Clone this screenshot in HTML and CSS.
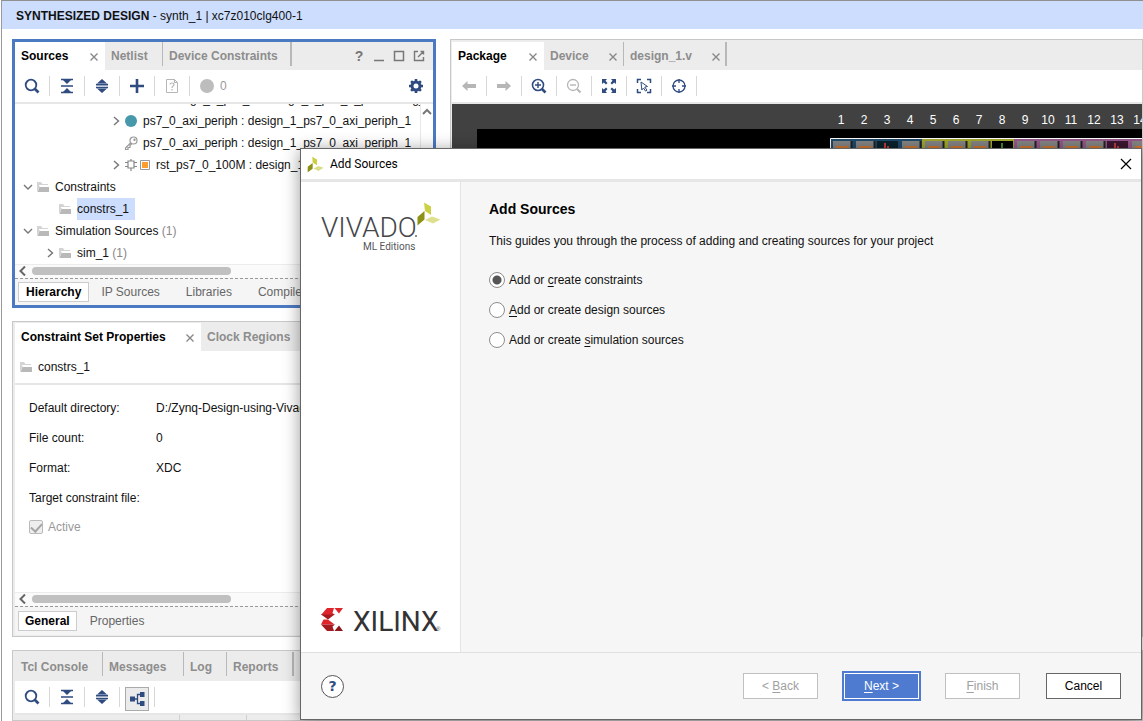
FILE: index.html
```html
<!DOCTYPE html>
<html lang="en">
<head>
<meta charset="utf-8">
<title>Synthesized Design - synth_1</title>
<link rel="stylesheet" href="styles.css">
</head>
<body>
<svg class="defs" aria-hidden="true">
  <defs>
    <symbol id="i-search" viewBox="0 0 16 16"><circle cx="7" cy="7" r="5.300" fill="none" stroke="currentColor" stroke-width="1.800"/><path d="M10.500 10.500l4 4" stroke="currentColor" stroke-width="2.600"/></symbol>
    <symbol id="i-collapse" viewBox="0 0 16 16"><path d="M3 1h10L8 6zM3 15h10L8 10z" fill="currentColor"/><path d="M2 1.500h12M2 14.500h12M2 8h12" stroke="currentColor" stroke-width="1.600"/></symbol>
    <symbol id="i-expand" viewBox="0 0 16 16"><path d="M3 5.500L8 1l5 4.500zM3 10.500L8 15l5-4.500z" fill="currentColor"/><path d="M2 6.700h12M2 9.500h12" stroke="currentColor" stroke-width="1.700"/></symbol>
    <symbol id="i-plus" viewBox="0 0 16 16"><path d="M8 1v14M1 8h14" stroke="currentColor" stroke-width="2.600"/></symbol>
    <symbol id="i-doc" viewBox="0 0 16 16"><path d="M2.500 1.500h8l3 3v10h-11z" fill="none" stroke="currentColor"/><path d="M10.500 1.500v3h3M6 6.500q0-1.500 2-1.500t2 1.500q0 1-1 1.500t-1 2M8 11v1.500" fill="none" stroke="currentColor" stroke-width="1.200"/></symbol>
    <symbol id="i-gear" viewBox="0 0 16 16"><circle cx="8" cy="8" r="4" fill="none" stroke="currentColor" stroke-width="3"/><path d="M8 1v3M8 12v3M1 8h3M12 8h3M3.100 3.100l2 2M10.900 10.900l2 2M3.100 12.900l2-2M10.900 5.100l2-2" stroke="currentColor" stroke-width="2.600"/></symbol>
    <symbol id="i-x" viewBox="0 0 10 10"><path d="M1.500 1.500l7 7M8.500 1.500l-7 7" stroke="currentColor" stroke-width="1.400"/></symbol>
    <symbol id="i-folder" viewBox="0 0 14 14"><path d="M1 12V2h4l1.500 2H12v2H4z" fill="#d4d4d4"/><path d="M3.500 7H13v5H1.500z" fill="#b9b9b9"/><path d="M3 5.500h10" stroke="#fff"/></symbol>
    <symbol id="i-right" viewBox="0 0 10 10"><path d="M3 1l4.500 4L3 9" fill="none" stroke="currentColor" stroke-width="1.400"/></symbol>
    <symbol id="i-down" viewBox="0 0 10 10"><path d="M1 3l4 4 4-4" fill="none" stroke="currentColor" stroke-width="1.400"/></symbol>
    <symbol id="i-left" viewBox="0 0 10 10"><path d="M7 0.500L2.500 5 7 9.500" fill="none" stroke="currentColor" stroke-width="2"/></symbol>
    <symbol id="i-back" viewBox="0 0 16 16"><path d="M1 8l5.500-5v3H15v4H6.500v3z" fill="currentColor"/></symbol>
    <symbol id="i-fwd" viewBox="0 0 16 16"><path d="M15 8L9.500 3v3H1v4h8.500v3z" fill="currentColor"/></symbol>
    <symbol id="i-zin" viewBox="0 0 16 16"><circle cx="7" cy="7" r="5.500" fill="none" stroke="currentColor" stroke-width="1.600"/><path d="M4 7h6M7 4v6" stroke="currentColor" stroke-width="1.400"/><path d="M11 11l3.500 3.500" stroke="currentColor" stroke-width="2.600"/></symbol>
    <symbol id="i-zout" viewBox="0 0 16 16"><circle cx="7" cy="7" r="5.500" fill="none" stroke="currentColor" stroke-width="1.300"/><path d="M4 7h6" stroke="currentColor" stroke-width="1.400"/><path d="M11 11l3.500 3.500" stroke="currentColor" stroke-width="2"/></symbol>
    <symbol id="i-fit" viewBox="0 0 16 16"><path d="M1 1h5L4.500 2.800 6.500 5 5 6.500 2.800 4.500 1 6zM15 1h-5l1.500 1.800L9.500 5 11 6.500l2.200-2L15 6zM1 15h5l-1.500-1.800 2-2.200L5 9.500l-2.200 2L1 10zM15 15h-5l1.500-1.800-2-2.200L11 9.500l2.200 2L15 10z" fill="currentColor"/></symbol>
    <symbol id="i-select" viewBox="0 0 16 16"><path d="M1.500 5V1.500H5M11 1.500h3.500V5M1.500 11v3.500H5M11 14.500h3.500V11" fill="none" stroke="currentColor" stroke-width="1.500"/><path d="M5 4l6.500 4.500-2.800.6 2.300 3-1.500 1-2-3.100L5.800 12z" fill="none" stroke="currentColor"/></symbol>
    <symbol id="i-target" viewBox="0 0 16 16"><circle cx="8" cy="8" r="6" fill="none" stroke="currentColor" stroke-width="1.300"/><path d="M8 1v4M8 11v4M1 8h4M11 8h4" stroke="currentColor" stroke-width="1.300"/></symbol>
    <symbol id="i-tree" viewBox="0 0 16 16"><path d="M1 5.500h5v5H1zM11 1h4.500v5H11zM11 10h4.500v5H11z" fill="currentColor"/><path d="M6 8h2.500M12 3.500H8.500v9H12" fill="none" stroke="currentColor" stroke-width="1.300"/></symbol>
    <symbol id="i-mark" viewBox="0 0 24 24"><path d="M7.500 1L14 5v8L8 9z" fill="#c9cf3e"/><path d="M8 10v8l-7 5v-8z" fill="#8b9016"/><path d="M9.500 17.500L16 14l7.500 2.500L16 21z" fill="#d9dd86"/></symbol>
  </defs>
</svg>

<div class="app">
  <header class="banner"><strong>SYNTHESIZED DESIGN</strong> - synth_1 | xc7z010clg400-1</header>

  <main class="workspace">
    <section class="panel focused sources">
      <div class="tabs">
        <button class="tab active w90">Sources<svg class="x"><use href="#i-x"/></svg></button>
        <button class="tab w58">Netlist</button>
        <button class="tab w129">Device Constraints</button>
        <div class="win">
          <span>?</span>
          <svg viewBox="0 0 12 12"><path d="M1 10.500h10" stroke="#777" stroke-width="1.500"/></svg>
          <svg viewBox="0 0 12 12"><path d="M1.500 1.500h9v9h-9z" fill="none" stroke="#777" stroke-width="1.500"/></svg>
          <svg viewBox="0 0 12 12"><path d="M5 1.500H1.500v9h9V7M5 7l5-5M7.500 1.500h3v3" fill="none" stroke="#777" stroke-width="1.400"/></svg>
        </div>
      </div>
      <div class="toolbar">
        <button aria-label="Search"><svg><use href="#i-search"/></svg></button>
        <button aria-label="Collapse all"><svg><use href="#i-collapse"/></svg></button>
        <button aria-label="Expand all"><svg><use href="#i-expand"/></svg></button>
        <button aria-label="Add sources"><svg><use href="#i-plus"/></svg></button>
        <button class="off" aria-label="File info"><svg><use href="#i-doc"/></svg></button>
        <span class="count"><i></i>0</span>
        <button class="gear" aria-label="Settings"><svg><use href="#i-gear"/></svg></button>
      </div>
      <div class="treebox">
        <ul class="tree">
          <li class="l4">design_1_ps7_0 : design_1_ps7_0_processing_0</li>
          <li class="l3"><svg class="tw"><use href="#i-right"/></svg><svg class="ic" viewBox="0 0 14 14"><circle cx="7" cy="7" r="6" fill="#4699ab"/></svg>ps7_0_axi_periph : design_1_ps7_0_axi_periph_1</li>
          <li class="l3"><span class="tw"></span><svg class="ic" viewBox="0 0 14 14"><g fill="none" stroke="#999" stroke-width="1.200"><circle cx="9.500" cy="4.500" r="3.500"/><path d="M7 6.500L1.500 12v1.500h2.500v-2h2v-2l1.800-1.800"/><circle cx="10.500" cy="3.700" r=".6"/></g></svg>ps7_0_axi_periph : design_1_ps7_0_axi_periph_1</li>
          <li class="l3"><svg class="tw"><use href="#i-right"/></svg><svg class="ic" viewBox="0 0 14 14"><g fill="none" stroke="#888" stroke-width="1.200"><path d="M4 3h6v7H4zM1 4.500h3M1 8.500h3M10 4.500h3M10 8.500h3M7 1v2M7 10v3"/></g></svg><svg class="ic tight" viewBox="0 0 14 14"><path d="M2.500 2.500h9v9h-9z" fill="#fff" stroke="#999"/><path d="M4 4h6v6H4z" fill="#ff9d2e"/></svg>rst_ps7_0_100M : design_1_rst_0</li>
          <li class="l0"><svg class="tw"><use href="#i-down"/></svg><svg class="ic"><use href="#i-folder"/></svg>Constraints</li>
          <li class="l1"><span class="tw"></span><svg class="ic"><use href="#i-folder"/></svg><span class="picked">constrs_1</span></li>
          <li class="l0"><svg class="tw"><use href="#i-down"/></svg><svg class="ic"><use href="#i-folder"/></svg>Simulation Sources <em>(1)</em></li>
          <li class="l1"><svg class="tw"><use href="#i-right"/></svg><svg class="ic"><use href="#i-folder"/></svg>sim_1 <em>(1)</em></li>
        </ul>
        <div class="vscroll"><svg viewBox="0 0 10 10"><path d="M1 7l4-4 4 4" fill="none" stroke="#777" stroke-width="2"/></svg></div>
      </div>
      <div class="hscroll"><svg><use href="#i-left"/></svg><i class="thumb"></i></div>
      <div class="views">
        <button class="on">Hierarchy</button><button>IP Sources</button><button>Libraries</button><button>Compile Order</button>
      </div>
    </section>

    <section class="panel props">
      <div class="tabs">
        <button class="tab active w186">Constraint Set Properties<svg class="x"><use href="#i-x"/></svg></button>
        <button class="tab w129">Clock Regions</button>
      </div>
      <div class="object"><svg class="ic"><use href="#i-folder"/></svg>constrs_1</div>
      <div class="details">
        <dl>
          <dt>Default directory:</dt><dd>D:/Zynq-Design-using-Vivado</dd>
          <dt>File count:</dt><dd>0</dd>
          <dt>Format:</dt><dd>XDC</dd>
          <dt>Target constraint file:</dt><dd></dd>
        </dl>
        <label class="check"><input type="checkbox" checked disabled>Active</label>
      </div>
      <div class="hscroll"><svg><use href="#i-left"/></svg><i class="thumb"></i></div>
      <div class="views"><button class="on">General</button><button>Properties</button></div>
    </section>

    <section class="panel device">
      <div class="tabs">
        <button class="tab active w92">Package<svg class="x"><use href="#i-x"/></svg></button>
        <button class="tab w80">Device<svg class="x"><use href="#i-x"/></svg></button>
        <button class="tab w103">design_1.v<svg class="x"><use href="#i-x"/></svg></button>
      </div>
      <div class="toolbar">
        <button class="off" aria-label="Back"><svg><use href="#i-back"/></svg></button>
        <button class="off" aria-label="Forward"><svg><use href="#i-fwd"/></svg></button>
        <button aria-label="Zoom in"><svg><use href="#i-zin"/></svg></button>
        <button class="off" aria-label="Zoom out"><svg><use href="#i-zout"/></svg></button>
        <button aria-label="Zoom fit"><svg><use href="#i-fit"/></svg></button>
        <button aria-label="Select area"><svg><use href="#i-select"/></svg></button>
        <button aria-label="Autofit selection"><svg><use href="#i-target"/></svg></button>
      </div>
      <div class="canvas">
        <svg width="100%" height="100%">
          <defs>
            <g id="cell"><path d="M3 37h18v12H3z" fill="#858585"/><path d="M6 42h12v8H6z" fill="#d07530"/><path d="M21.500 37v12" stroke="#222" stroke-width="2"/></g>
          </defs>
          <rect x="25" y="25" width="100%" height="100%" fill="#000"/>
          <g fill="#fff" font-size="12" text-anchor="middle">
            <text x="389" y="20">1</text><text x="412" y="20">2</text><text x="435" y="20">3</text><text x="458" y="20">4</text><text x="481" y="20">5</text><text x="504" y="20">6</text><text x="527" y="20">7</text><text x="550" y="20">8</text><text x="573" y="20">9</text><text x="596" y="20">10</text><text x="619" y="20">11</text><text x="642" y="20">12</text><text x="665" y="20">13</text><text x="688" y="20">14</text>
          </g>
          <rect x="378" y="34" width="92" height="20" fill="#204a6b"/>
          <rect x="470" y="34" width="92" height="20" fill="#a3a82c"/>
          <rect x="562" y="34" width="140" height="20" fill="#96588a"/>
          <path d="M378.500 60V34.500H700" fill="none" stroke="#fff"/>
          <use href="#cell" x="378"/><use href="#cell" x="401"/><use href="#cell" x="447"/><use href="#cell" x="470"/><use href="#cell" x="493"/><use href="#cell" x="516"/><use href="#cell" x="562"/><use href="#cell" x="585"/><use href="#cell" x="608"/><use href="#cell" x="631"/><use href="#cell" x="677"/>
          <path d="M425 37h21v12h-21z" fill="#0b222d"/><path d="M540 37h21v12h-21z" fill="#000"/><path d="M655 37h21v12h-21z" fill="#3c1730"/>
          <path d="M433 39v8M436 42v6M663 39v8M666 42v6" stroke="#c23a3a" stroke-width="2"/><path d="M550 39v9" stroke="#418a28" stroke-width="2"/>
          <g>
            <path d="M689 50h4v450h-4z" fill="#777"/>
            <path d="M689 57h4v14h-4zM689 110h4v14h-4zM689 130h4v12h-4z" fill="#d6752b"/>
            <path d="M689 82h4v22h-4zM689 312h4v20h-4zM689 497h4v33h-4z" fill="#000"/>
            <path d="M689 94h4v6h-4zM689 194h4v24h-4zM689 324h4v8h-4z" fill="#3f6b22"/>
            <path d="M689 172h4v3h-4zM689 332h4v3h-4z" fill="#a3e43a"/>
            <path d="M689 206h4v6h-4zM689 434h4v7h-4z" fill="#cf3434"/>
            <path d="M689 365h4v6h-4zM689 492h4v3h-4z" fill="#1a23d8"/>
            <path d="M689 406h4v16h-4z" fill="#7fb0de"/>
          </g>
        </svg>
      </div>
    </section>

    <section class="panel console">
      <div class="tabs">
        <button class="tab w88">Tcl Console</button><button class="tab w81">Messages</button><button class="tab w43">Log</button><button class="tab w67">Reports</button>
      </div>
      <div class="toolbar">
        <button aria-label="Search"><svg><use href="#i-search"/></svg></button>
        <button aria-label="Collapse all"><svg><use href="#i-collapse"/></svg></button>
        <button aria-label="Expand all"><svg><use href="#i-expand"/></svg></button>
        <button class="pressed" aria-label="Group by hierarchy"><span><svg><use href="#i-tree"/></svg></span></button>
      </div>
      <div class="columns"><i></i><i></i><i></i></div>
    </section>
  </main>
</div>

<div class="dialog" role="dialog" aria-labelledby="dlg-title">
  <div class="titlebar">
    <svg class="mark"><use href="#i-mark"/></svg>
    <span id="dlg-title">Add Sources</span>
    <button aria-label="Close"><svg viewBox="0 0 12 12"><path d="M1 1l10 10M11 1L1 11" stroke="#000" stroke-width="1.200"/></svg></button>
  </div>
  <div class="body">
    <aside>
      <svg class="vivado" viewBox="0 0 130 56" role="img" aria-label="Vivado ML Editions">
        <text class="word" x="0" y="39">VIVADO</text>
        <circle cx="95" cy="38" r="1" fill="#666"/>
        <text class="sub" x="42" y="52">ML Editions</text>
        <path d="M103 4.500l7 4v8.500l-6-4z" fill="#cdd244"/><path d="M103.500 13v8.500l-7 6v-8.500z" fill="#8d9116"/><path d="M104 22l7-3.500 8.500 3-7.500 4z" fill="#dde08e"/>
      </svg>
      <svg class="xilinx" viewBox="0 0 130 30" role="img" aria-label="Xilinx">
        <path d="M6 3h7l-1.500 5 2.500 2H0z" fill="#e0242c"/><path d="M0 9.500h13.500L7 14.500z" fill="#a51a20"/><path d="M7 14.500L13.500 19.500H0L2.500 14.500z" fill="#e0242c"/><path d="M0 19.500h14l-2.500 2L13 26H6z" fill="#a51a20"/><path d="M13.500 3H22l-4 5.500z" fill="#e0242c"/><path d="M13.500 26H22l-4-5.500z" fill="#8c161c"/>
        <text class="xword" x="32" y="26">XILINX</text>
        <text class="reg" x="115" y="26">®</text>
      </svg>
    </aside>
    <form class="content">
      <h1>Add Sources</h1>
      <p>This guides you through the process of adding and creating sources for your project</p>
      <label><input type="radio" name="kind" checked><span>Add or <u>c</u>reate constraints</span></label>
      <label><input type="radio" name="kind"><span><u>A</u>dd or create design sources</span></label>
      <label><input type="radio" name="kind"><span>Add or create <u>s</u>imulation sources</span></label>
    </form>
  </div>
  <footer>
    <button class="help" aria-label="Help">?</button>
    <button class="btn" disabled><span>&lt; <u>B</u>ack</span></button>
    <button class="btn primary"><span><u>N</u>ext &gt;</span></button>
    <button class="btn" disabled><span><u>F</u>inish</span></button>
    <button class="btn cancel">Cancel</button>
  </footer>
</div>
</body>
</html>
```
FILE: styles.css
```css
* { box-sizing: border-box; }
html, body { height: 100%; }
body {
  margin: 0;
  overflow: hidden;
  background: #fff;
  color: #111;
  font: 12px/16px "Liberation Sans", Arial, sans-serif;
}
button {
  margin: 0;
  padding: 0;
  border: 0;
  background: none;
  color: inherit;
  font: inherit;
}
svg { display: block; flex: none; }
.defs { position: absolute; width: 0; height: 0; }

.app {
  height: 100%;
  display: flex;
  flex-direction: column;
  margin-left: 1px;
  border-left: 1px solid #999;
  border-top: 1px solid #909090;
}
.banner {
  height: 28px;
  padding: 7px 14px;
  background: #ccddfe;
  white-space: nowrap;
}
.workspace {
  flex: 1;
  min-height: 0;
  display: grid;
  grid-template-columns: 424px 1fr;
  grid-template-rows: auto 1fr 71px;
  gap: 13px 14px;
  padding: 10px 0 0 10px;
}
.panel {
  display: flex;
  flex-direction: column;
  min-width: 0;
  min-height: 0;
  overflow: hidden;
  border: 3px solid #ececec;
  outline: 1px solid #c8c8c8;
  outline-offset: -1px;
  background: #fff;
}
.focused { border-color: #4c7ac2; outline: 0; }
.props { grid-row: 2; grid-column: 1; border-top-width: 2px; border-bottom-width: 2px; }
.device { grid-row: 1 / 3; grid-column: 2; border-right: 0; border-left-width: 2px; border-bottom-width: 2px; }
.console { grid-row: 3; grid-column: 1 / 3; border-top-width: 2px; border-bottom: 0; }

.tabs { height: 28px; display: flex; flex: none; background: #ececec; }
.tab {
  position: relative;
  flex: none;
  padding: 0 6px;
  text-align: left;
  font-weight: bold;
  color: #8d8d8d;
  white-space: nowrap;
}
.tab:not(.active)::after {
  content: "";
  position: absolute;
  top: 0;
  right: 0;
  height: 24px;
  border-right: 1px solid #b8b8b8;
}
.tab:not(.active):last-of-type::after { border-right-width: 2px; }
.tab.active { background: #fff; color: #000; }
.tab .x { position: absolute; right: 6px; top: 10px; width: 10px; height: 10px; color: #888; }
.w43 { width: 43px; } .w58 { width: 58px; } .w67 { width: 67px; } .w80 { width: 80px; }
.w81 { width: 81px; } .w88 { width: 88px; } .w90 { width: 90px; } .w92 { width: 92px; }
.w103 { width: 103px; } .w129 { width: 129px; } .w186 { width: 186px; }
.win {
  display: flex;
  align-items: center;
  gap: 8px;
  margin-left: auto;
  padding-right: 8px;
  color: #777;
  font-size: 14px;
  font-weight: bold;
}
.win span { width: 12px; text-align: center; }
.win svg { width: 12px; height: 12px; }

.toolbar {
  height: 34px;
  flex: none;
  display: flex;
  align-items: center;
  border-bottom: 2px solid #e6e6e6;
  color: #2f4b80;
}
.console .tabs { height: 29px; }
.toolbar button {
  width: 35px;
  height: 20px;
  display: grid;
  place-items: center;
  border-right: 1px solid #d8d8d8;
}
.toolbar svg { width: 16px; height: 16px; }
.toolbar .off { color: #b6b6b6; }
.toolbar .gear { margin-left: auto; border: 0; }
.count { display: flex; align-items: center; gap: 6px; padding-left: 10px; color: #999; }
.count i { width: 14px; height: 14px; border-radius: 50%; background: #bdbdbd; }
.pressed span { padding: 3px; border: 1px solid #aaa; background: #ebebeb; }

.treebox { height: 160px; display: flex; overflow: hidden; }
.tree {
  flex: 1;
  min-width: 0;
  display: flex;
  flex-direction: column;
  justify-content: flex-end;
  margin: 0;
  padding: 0;
  overflow: hidden;
  list-style: none;
}
.tree li { height: 22px; flex: none; display: flex; align-items: center; white-space: pre; }
.tree em { color: #888; font-style: normal; }
.l0 { padding-left: 8px; }
.l1 { padding-left: 30px; }
.l3 { padding-left: 96px; }
.l4 { padding-left: 153px; }
.tw { width: 10px; height: 10px; flex: none; color: #777; }
.ic { width: 14px; height: 14px; margin: 0 5px 0 3px; }
.tree .ic.tight { margin-left: -5px; margin-right: 4px; }
.picked { padding: 3px 6px 3px 0; background: #ccddfe; }
.vscroll { width: 13px; padding: 3px 1px; border-left: 1px solid #e8e8e8; }
.vscroll svg { width: 10px; height: 10px; }
.hscroll {
  height: 14px;
  flex: none;
  display: flex;
  align-items: center;
  gap: 4px;
  padding: 0 3px 2px;
  border-top: 1px solid #ececec;
  background: #fafafa;
  color: #666;
}
.hscroll svg { width: 10px; height: 10px; }
.hscroll .thumb { width: 199px; height: 8px; border-radius: 4px; background: #c0c0c0; }
.views {
  height: 27px;
  flex: none;
  display: flex;
  align-items: center;
  gap: 8px;
  padding: 0 3px;
  border-top: 1px dashed #999;
  background: #f5f5f5;
  color: #666;
}
.views button { height: 20px; padding: 0 5px; white-space: nowrap; }
.views .on { padding: 0 6px; border: 1px solid #ccc; background: #fff; color: #000; font-weight: bold; }
.focused .views .on { padding: 0 7px; }
.focused .views button + button { padding: 0 4px; margin-right: 10px; }
.props .views { height: 29px; }

.object {
  height: 34px;
  flex: none;
  display: flex;
  align-items: center;
  padding-left: 1px;
  border-bottom: 2px solid #e6e6e6;
}
.details { flex: 1; min-height: 0; padding: 8px 14px; }
dl { display: grid; grid-template-columns: 127px 1fr; grid-auto-rows: 30px; align-items: center; margin: 0; }
dd { margin: 0; white-space: nowrap; }
dt { white-space: nowrap; }
.check { display: flex; align-items: center; gap: 5px; padding-top: 6px; color: #999; }
.check input {
  appearance: none;
  width: 14px;
  height: 14px;
  margin: 0;
  display: grid;
  place-items: center;
  border: 1px solid #bbb;
  border-radius: 2px;
  background: #eee;
}
.check input::after {
  content: "";
  width: 5px;
  height: 9px;
  margin-bottom: 2px;
  border: solid #a5a5a5;
  border-width: 0 2px 2px 0;
  transform: rotate(42deg);
}
.canvas { flex: 1; min-height: 0; background: #414141; }
.columns { flex: 1; display: flex; background: #ececec; }
.columns i { width: 165px; border-right: 1px solid #d0d0d0; }
.columns i + i { width: 67px; }

.dialog {
  position: absolute;
  inset: 148px 1px 1px 300px;
  display: flex;
  flex-direction: column;
  border: 1px solid #666;
  background: #f6f6f6;
  box-shadow: 0 2px 16px rgba(0, 0, 0, .4);
}
.titlebar {
  height: 33px;
  flex: none;
  display: flex;
  align-items: center;
  gap: 6px;
  padding: 0 9px 0 6px;
  border-bottom: 3px solid #e6e6e6;
  background: #fff;
  color: #000;
  font-family: Roboto, sans-serif;
}
.mark { width: 17px; height: 17px; }
.titlebar button { margin-left: auto; }
.titlebar button svg { width: 12px; height: 12px; }
.body { flex: 1; min-height: 0; display: flex; }
aside {
  width: 160px;
  flex: none;
  display: flex;
  flex-direction: column;
  justify-content: space-between;
  padding: 16px 0 17px 20px;
  border-right: 1px solid #e4e4e4;
  background: #fff;
}
.vivado { width: 130px; height: 56px; }
.xilinx { width: 130px; height: 30px; }
.word { font: 300 28px Roboto, sans-serif; fill: #45464a; }
.sub { font: 10px Roboto, sans-serif; fill: #55565a; }
.xword { font: 28px Roboto, sans-serif; fill: #333; }
.reg { font: 6px "Liberation Sans", sans-serif; fill: #555; }
.content { flex: 1; padding: 19px 28px; }
h1 { margin: 0; font-size: 14px; line-height: 16px; color: #000; }
p { margin: 16px 0 23px; }
.content label { display: flex; align-items: center; gap: 4px; height: 16px; margin-bottom: 14px; }
.content input {
  appearance: none;
  width: 16px;
  height: 16px;
  margin: 0;
  border: 1px solid #8d8d8d;
  border-radius: 50%;
  background: #fff;
}
.content input:checked { background: radial-gradient(circle, #555 0 4px, #fff 5px); }
u { text-underline-offset: 2px; }
footer {
  height: 67px;
  flex: none;
  display: flex;
  align-items: center;
  gap: 26px;
  padding: 0 20px;
  border-top: 1px solid #e0e0e0;
}
.help {
  width: 23px;
  height: 23px;
  margin-right: auto;
  border: 1px solid #555;
  border-radius: 50%;
  background: #fff;
  color: #2f4b80;
  font: bold 14px/16px "DejaVu Sans", sans-serif;
}
.btn {
  width: 75px;
  height: 26px;
  border: 1px solid #c0c0c0;
  background: #fff;
  color: #a0a0a0;
}
.primary {
  border-color: #fff;
  outline: 2px solid #4e7bcf;
  background: #4e7bcf;
  color: #fff;
}
.cancel { border-color: #666; color: #000; }
```
